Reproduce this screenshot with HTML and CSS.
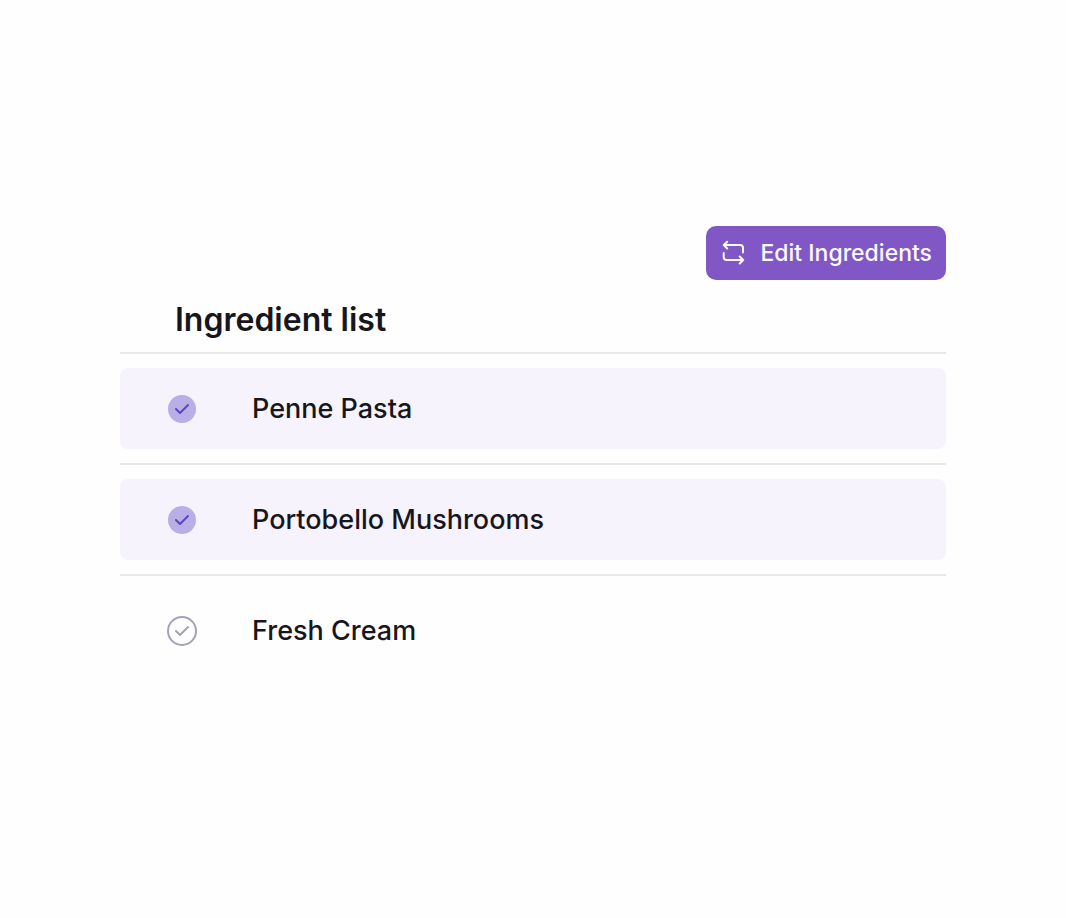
FILE: index.html
```html
<!DOCTYPE html>
<html lang="en">
<head>
  <meta charset="utf-8">
  <meta name="viewport" content="width=device-width, initial-scale=1">
  <title>Ingredient list</title>
  <link rel="stylesheet" href="styles.css">
</head>
<body>
  <main class="page">
    <button class="edit-button" type="button">
      <svg class="edit-icon" viewBox="0 0 24 26" aria-hidden="true">
        <path d="M6.200 1.700 2.700 5 6.200 8.500M3 5h16a3 3 0 0 1 3 3v4.500"/>
        <path d="M18.700 16.500 22.200 20 18.700 23.500M22 20H5.700a3 3 0 0 1-3-3v-4"/>
      </svg>
      Edit Ingredients
    </button>
    <h1 class="title">Ingredient list</h1>
    <ul class="list">
      <li class="item">
        <label class="row">
          <span class="check">
            <input class="check-input" type="checkbox" checked>
            <svg class="check-mark" viewBox="0 0 30 30" aria-hidden="true"><path d="M9 15 13 19 21 11"/></svg>
          </span>
          Penne Pasta
        </label>
      </li>
      <li class="item">
        <label class="row">
          <span class="check">
            <input class="check-input" type="checkbox" checked>
            <svg class="check-mark" viewBox="0 0 30 30" aria-hidden="true"><path d="M9 15 13 19 21 11"/></svg>
          </span>
          Portobello Mushrooms
        </label>
      </li>
      <li class="item">
        <label class="row">
          <span class="check">
            <input class="check-input" type="checkbox">
            <svg class="check-mark" viewBox="0 0 30 30" aria-hidden="true"><path d="M9 15 13 19 21 11"/></svg>
          </span>
          Fresh Cream
        </label>
      </li>
    </ul>
  </main>
</body>
</html>
```

FILE: styles.css
```css
* {
  box-sizing: border-box;
}

body {
  margin: 0;
  background: #fefefe;
  color: #18161d;
  font-family: Inter, "Liberation Sans", sans-serif;
  font-weight: 500;
}

.page {
  display: flex;
  flex-direction: column;
  padding: 226px 120px 0;
}

.edit-button {
  display: flex;
  align-items: center;
  align-self: flex-end;
  gap: 15px;
  padding: 12px 14px 12px 15px;
  border: 0;
  border-radius: 10px;
  background: #8057c4;
  color: #fbf8ff;
  font: inherit;
  font-size: 23px;
  line-height: 30px;
  cursor: pointer;
}

.edit-icon {
  width: 24px;
  height: 26px;
  fill: none;
  stroke: currentColor;
  stroke-width: 2;
  stroke-linecap: round;
  stroke-linejoin: round;
}

.title {
  margin: 20px 0 12px;
  padding: 0 55px;
  font-size: 32px;
  font-weight: 600;
  line-height: 40px;
}

.list {
  margin: 0;
  padding: 0;
  list-style: none;
}

.item {
  padding: 14px 0;
  border-top: 2px solid #e8e7ec;
}

.row {
  display: flex;
  align-items: center;
  gap: 55px;
  min-height: 81px;
  padding: 0 47px;
  border-radius: 8px;
  font-size: 27px;
  line-height: 36px;
  cursor: pointer;
}

.row:has(:checked) {
  background: #f6f3fd;
}

.check {
  display: grid;
  flex: none;
  width: 30px;
  height: 30px;
  place-items: center;
}

.check-input,
.check-mark {
  grid-area: 1 / 1;
}

.check-input {
  appearance: none;
  width: 30px;
  height: 30px;
  margin: 0;
  border: 2px solid #a6a1b5;
  border-radius: 50%;
}

.check-input:checked {
  width: 28px;
  height: 28px;
  border: 0;
  background: #b9afe6;
}

.check-mark {
  width: 30px;
  height: 30px;
  fill: none;
  stroke: #a5a2ad;
  stroke-width: 2;
  stroke-linecap: round;
  stroke-linejoin: round;
  pointer-events: none;
}

.check-input:checked + .check-mark {
  stroke: #5d43c5;
}
```
